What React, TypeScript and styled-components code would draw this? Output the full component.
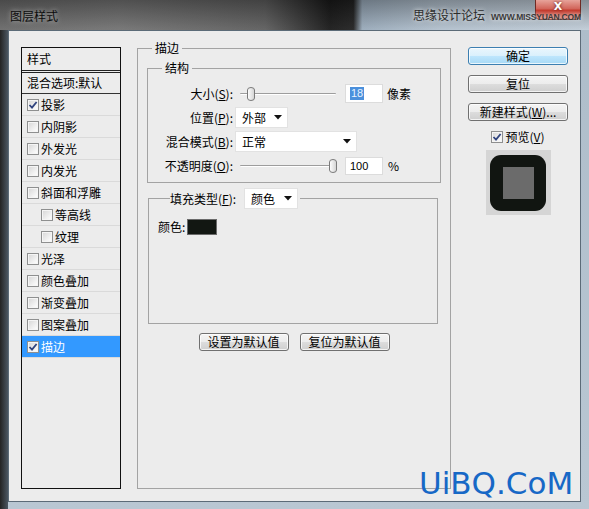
import React from "react";
import styled, { createGlobalStyle } from "styled-components";

const GlobalStyle = createGlobalStyle`
  html, body {
    margin: 0;
    padding: 0;
    background: #1b1b1b;
  }
  body {
    font-family: "Noto Sans CJK SC", "Liberation Sans", sans-serif;
    font-size: 12px;
    line-height: 16px;
    color: #000;
  }
  #root {
    width: 589px;
    height: 509px;
    overflow: hidden;
  }
`;

const Window = styled("div")`
  position: relative;
  width: 589px;
  height: 509px;
  display: flex;
  flex-direction: column;
  overflow: hidden;
`;

const TitleBar = styled("div")`
  height: 30px;
  flex: none;
  display: flex;
  justify-content: space-between;
  align-items: flex-start;
  background: linear-gradient(to bottom, rgba(0, 0, 0, 0.3), rgba(255, 255, 255, 0.05)),
    linear-gradient(
      to right,
      #6a6a6a 0%,
      #737373 20%,
      #5e5e5e 45%,
      #1a1a1a 56%,
      #222 60%,
      #9aabbb 61.5%,
      #b3c1ce 75%,
      #c0ccd7 100%
    );
`;

const Title = styled("div")`
  padding-left: 10px;
  line-height: 32px;
  font-size: 12px;
  color: #0c0c0c;
  text-shadow: 0 0 5px rgba(255, 255, 255, 0.6);
`;

const CloseButton = styled("div")`
  width: 46px;
  height: 20px;
  margin-right: 8px;
  box-sizing: border-box;
  border: 1px solid #6e2a24;
  border-top: 0;
  border-radius: 0 0 5px 5px;
  background: linear-gradient(to bottom, #e7a39a, #d2665b 45%, #c2392c 55%, #d8786b);
  color: #fff;
  font-family: "DejaVu Sans", sans-serif;
  font-weight: bold;
  font-size: 11px;
  line-height: 11px;
  padding-top: 1px;
  text-align: center;
  text-shadow: 0 0 3px #5a1410;
`;

const Frame = styled("div")`
  flex: 1;
  display: flex;
  padding: 0 8px 7px 8px;
  background: linear-gradient(to right, #232323 0px, #4b5661 8px, transparent 8px),
    linear-gradient(to bottom, #aebdca, #b9c7d3);
`;

const Client = styled("div")`
  flex: 1;
  display: flex;
  align-items: flex-start;
  background: #ececec;
  border: 1px solid #5c6b78;
  padding: 9px 11px 0 12px;
`;

/* ---------- left style list ---------- */

const StylePanel = styled("div")`
  width: 100px;
  height: 442px;
  box-sizing: border-box;
  margin-top: 7px;
  border: 1px solid #111;
  background: #ececec;
  flex: none;
`;

const PanelHeader = styled("div")`
  height: 22px;
  line-height: 22px;
  padding-left: 5px;
  border-bottom: 3px double #222;
`;

const BlendRow = styled("div")`
  height: 20px;
  line-height: 20px;
  padding-left: 5px;
  border-bottom: 1px solid #333;
`;

const StyleRow = styled("div")<{ $sub?: boolean; $selected?: boolean }>`
  height: 21px;
  display: flex;
  align-items: center;
  gap: 2px;
  padding-left: ${(p) => (p.$sub ? "19px" : "5px")};
  border-bottom: 1px solid #dadada;
  background: ${(p) => (p.$selected ? "#3399ff" : "transparent")};
  color: ${(p) => (p.$selected ? "#fff" : "#000")};
`;

const Box = styled("span")`
  width: 12px;
  height: 12px;
  box-sizing: border-box;
  flex: none;
  border: 1px solid #8e8f8f;
  background: linear-gradient(135deg, #d5d5d5, #f4f4f4 70%, #fff);
  box-shadow: inset 0 0 0 1px #f5f5f5;
  display: flex;
  align-items: center;
  justify-content: center;
`;

function Checkbox({ checked }: { checked?: boolean }) {
  return (
    <Box>
      {checked && (
        <svg width="10" height="10" viewBox="0 0 10 10">
          <path d="M1.5 5 L4 7.6 L8.6 2" fill="none" stroke="#2f437e" strokeWidth="1.8" />
        </svg>
      )}
    </Box>
  );
}

/* ---------- main stroke settings ---------- */

const MainCol = styled("div")`
  width: 314px;
  margin-left: 16px;
  flex: none;
`;

const Group = styled("fieldset")`
  margin: 0;
  min-width: 0;
  height: 449px;
  box-sizing: border-box;
  border: 1px solid #a3a3a3;
  padding: 4px 9px 0 9px;
`;

const Legend = styled("legend")<{ $offset: number }>`
  margin-left: ${(p) => p.$offset}px;
  padding: 0 3px;
  line-height: 16px;
`;

const SubGroup = styled("fieldset")`
  margin: 0;
  min-width: 0;
  border: 1px solid #a3a3a3;
  padding: 7px 0 6px 0;
  display: flex;
  flex-direction: column;
  gap: 3px;
`;

const FormRow = styled("div")`
  height: 21px;
  display: grid;
  grid-template-columns: 85px 1fr;
  align-items: center;
`;

const Label = styled("span")`
  text-align: right;
  white-space: nowrap;
`;

const Controls = styled("div")`
  display: flex;
  align-items: center;
`;

const SliderTrack = styled("div")`
  position: relative;
  width: 100px;
  height: 14px;
  margin-left: 5px;
  &::before {
    content: "";
    position: absolute;
    left: 2px;
    right: 2px;
    top: 6px;
    height: 1px;
    background: #9d9d9d;
    border-bottom: 1px solid #fff;
    border-radius: 1px;
  }
`;

const Thumb = styled("svg")`
  position: absolute;
  top: 0;
`;

function Slider({ value, max }: { value: number; max: number }) {
  const left = (value / max) * 90;
  return (
    <SliderTrack>
      <Thumb width="10" height="14" viewBox="0 0 10 14" style={{ left }}>
        <defs>
          <linearGradient id="tg" x1="0" x2="1" y1="0" y2="0">
            <stop offset="0" stopColor="#ffffff" />
            <stop offset="1" stopColor="#d2d2d2" />
          </linearGradient>
        </defs>
        <path
          d="M1.5 3 Q1.5 0.5 5 0.5 Q8.5 0.5 8.5 3 V11 Q8.5 13.5 5 13.5 Q1.5 13.5 1.5 11 Z"
          fill="url(#tg)"
          stroke="#7a7a7a"
        />
      </Thumb>
    </SliderTrack>
  );
}

const NumberBox = styled("div")<{ $height: number }>`
  width: 38px;
  height: ${(p) => p.$height}px;
  box-sizing: border-box;
  margin-left: 7px;
  padding-left: 4px;
  background: #fff;
  border: 1px solid #dcdcdc;
  display: flex;
  align-items: center;
  font-family: "Liberation Sans", sans-serif;
  font-size: 11px;
`;

const Selected = styled("span")`
  background: #4b90dc;
  color: #e8f2ff;
  padding: 0 1px;
  line-height: 13px;
`;

const Unit = styled("span")<{ $gap: number }>`
  margin-left: ${(p) => p.$gap}px;
`;

const SelectBox = styled("div")<{ $width: number; $gap: number }>`
  width: ${(p) => p.$width}px;
  height: 21px;
  box-sizing: border-box;
  margin-left: ${(p) => p.$gap}px;
  padding: 0 5px 0 6px;
  background: #fff;
  border: 1px solid #e2e2e2;
  display: flex;
  align-items: center;
  justify-content: space-between;
`;

function Select({ value, width, gap }: { value: string; width: number; gap: number }) {
  return (
    <SelectBox $width={width} $gap={gap}>
      <span>{value}</span>
      <svg width="8" height="5" viewBox="0 0 8 5">
        <path d="M0 0 H8 L4 4.5 Z" fill="#111" />
      </svg>
    </SelectBox>
  );
}

const FillGroup = styled("fieldset")`
  margin: 5px 3px 0 1px;
  min-width: 0;
  height: 136px;
  box-sizing: border-box;
  border: 1px solid #a3a3a3;
  padding: 10px 9px 0 9px;
`;

const FillLegend = styled("legend")`
  margin-left: 12px;
  padding: 0 2px 0 0;
  display: flex;
  align-items: center;
`;

const ColorRow = styled("div")`
  display: flex;
  align-items: center;
  gap: 2px;
`;

const Swatch = styled("div")`
  width: 30px;
  height: 16px;
  box-sizing: border-box;
  border: 1px solid #6a6a6a;
  background: #121712;
`;

const ButtonRow = styled("div")`
  display: flex;
  justify-content: center;
  gap: 11px;
  margin-top: 9px;
`;

const Btn = styled("button")<{ $primary?: boolean; $width: number }>`
  width: ${(p) => p.$width}px;
  height: 18px;
  padding: 0;
  box-sizing: border-box;
  font: inherit;
  font-size: 12px;
  line-height: 14px;
  color: #000;
  border: 1px solid ${(p) => (p.$primary ? "#3c7fb1" : "#707070")};
  border-radius: 3px;
  background: ${(p) =>
    p.$primary
      ? "linear-gradient(#eaf6fd, #d9f0fc 50%, #bee6fd 50%, #a7d9f5)"
      : "linear-gradient(#f4f4f4, #ececec 50%, #dddddd 50%, #cfcfcf)"};
  box-shadow: inset 0 0 0 1px rgba(255, 255, 255, 0.75);
`;

/* ---------- right column ---------- */

const SideCol = styled("div")`
  width: 100px;
  margin: 7px 0 0 17px;
  flex: none;
  display: flex;
  flex-direction: column;
  align-items: center;
  gap: 10px;
`;

const PreviewToggle = styled("div")`
  display: flex;
  align-items: center;
  gap: 2px;
  height: 14px;
  margin-top: -1px;
`;

const Preview = styled("div")`
  width: 65px;
  height: 65px;
  margin-top: -4px;
  background: #d5d5d5;
  display: flex;
  align-items: center;
  justify-content: center;
`;

const PreviewStroke = styled("div")`
  width: 56px;
  height: 56px;
  border-radius: 11px;
  background: #111511;
  display: flex;
  align-items: center;
  justify-content: center;
`;

const PreviewFill = styled("div")`
  width: 31px;
  height: 32px;
  background: #6b6b6b;
`;

/* ---------- watermarks ---------- */

const SiteMark = styled("div")`
  position: absolute;
  left: 413px;
  top: 7px;
  display: flex;
  align-items: center;
  gap: 6px;
  color: #2c2c2c;
  text-shadow: 0 0 4px rgba(255, 255, 255, 0.9);
  pointer-events: none;
`;

const SiteUrl = styled("span")`
  margin-top: 5px;
  font-family: "Liberation Sans", sans-serif;
  font-size: 8.5px;
  line-height: 9px;
  font-weight: bold;
  letter-spacing: -0.2px;
  color: #3a3a3a;
`;

const UiMark = styled("div")`
  position: absolute;
  left: 419px;
  top: 468px;
  font-family: "DejaVu Sans", sans-serif;
  font-size: 31px;
  line-height: 31px;
  color: #1768c6;
  pointer-events: none;
`;

const styleItems = [
  { label: "投影", checked: true },
  { label: "内阴影" },
  { label: "外发光" },
  { label: "内发光" },
  { label: "斜面和浮雕" },
  { label: "等高线", sub: true },
  { label: "纹理", sub: true },
  { label: "光泽" },
  { label: "颜色叠加" },
  { label: "渐变叠加" },
  { label: "图案叠加" },
  { label: "描边", checked: true, selected: true },
];

export default function App() {
  return (
    <>
      <GlobalStyle />
      <Window>
        <TitleBar>
          <Title>图层样式</Title>
          <CloseButton>X</CloseButton>
        </TitleBar>
        <Frame>
          <Client>
            <StylePanel>
              <PanelHeader>样式</PanelHeader>
              <BlendRow>混合选项:默认</BlendRow>
              {styleItems.map((item) => (
                <StyleRow key={item.label} $sub={item.sub} $selected={item.selected}>
                  <Checkbox checked={item.checked} />
                  <span>{item.label}</span>
                </StyleRow>
              ))}
            </StylePanel>

            <MainCol>
              <Group>
                <Legend $offset={5}>描边</Legend>
                <SubGroup>
                  <Legend $offset={14}>结构</Legend>
                  <FormRow>
                    <Label>
                      大小(<u>S</u>):
                    </Label>
                    <Controls>
                      <Slider value={18} max={200} />
                      <NumberBox $height={19}>
                        <Selected>18</Selected>
                      </NumberBox>
                      <Unit $gap={4}>像素</Unit>
                    </Controls>
                  </FormRow>
                  <FormRow>
                    <Label>
                      位置(<u>P</u>):
                    </Label>
                    <Controls>
                      <Select value="外部" width={53} gap={2} />
                    </Controls>
                  </FormRow>
                  <FormRow>
                    <Label>
                      混合模式(<u>B</u>):
                    </Label>
                    <Controls>
                      <Select value="正常" width={122} gap={2} />
                    </Controls>
                  </FormRow>
                  <FormRow>
                    <Label>
                      不透明度(<u>O</u>):
                    </Label>
                    <Controls>
                      <Slider value={100} max={100} />
                      <NumberBox $height={18}>100</NumberBox>
                      <Unit $gap={5}>%</Unit>
                    </Controls>
                  </FormRow>
                </SubGroup>

                <FillGroup>
                  <FillLegend>
                    <span>
                      填充类型(<u>F</u>):
                    </span>
                    <Select value="颜色" width={54} gap={8} />
                  </FillLegend>
                  <ColorRow>
                    <span>颜色:</span>
                    <Swatch />
                  </ColorRow>
                </FillGroup>

                <ButtonRow>
                  <Btn $width={90}>设置为默认值</Btn>
                  <Btn $width={90}>复位为默认值</Btn>
                </ButtonRow>
              </Group>
            </MainCol>

            <SideCol>
              <Btn $primary $width={100}>
                确定
              </Btn>
              <Btn $width={100}>复位</Btn>
              <Btn $width={100}>
                新建样式(<u>W</u>)...
              </Btn>
              <PreviewToggle>
                <Checkbox checked />
                <span>
                  预览(<u>V</u>)
                </span>
              </PreviewToggle>
              <Preview>
                <PreviewStroke>
                  <PreviewFill />
                </PreviewStroke>
              </Preview>
            </SideCol>
          </Client>
        </Frame>
        <SiteMark>
          <span>思缘设计论坛</span>
          <SiteUrl>WWW.MISSYUAN.COM</SiteUrl>
        </SiteMark>
        <UiMark>UiBQ.CoM</UiMark>
      </Window>
    </>
  );
}
